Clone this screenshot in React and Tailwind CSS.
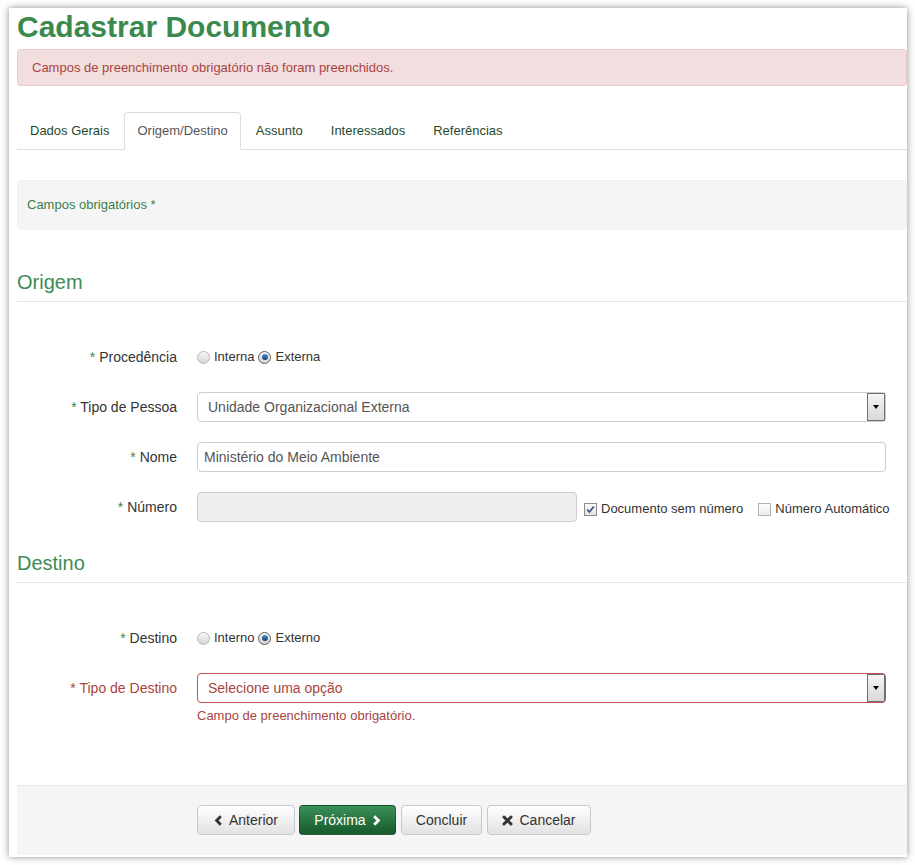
import React from "react";

function Radio({ checked }) {
  if (checked) {
    return (
      <span className="inline-flex h-[13px] w-[13px] items-center justify-center rounded-full border border-[#5a5a5a] bg-linear-to-b from-[#f4f4f4] to-[#d4d4d4]">
        <span className="h-[6px] w-[6px] rounded-full bg-linear-to-b from-[#4a93d6] to-[#0d3f73]" />
      </span>
    );
  }
  return (
    <span className="inline-block h-[13px] w-[13px] rounded-full border border-[#b8b8b8] bg-linear-to-b from-[#f7f7f7] to-[#d6d6d6]" />
  );
}

function Checkbox({ checked }) {
  return (
    <span
      className={
        "inline-flex h-[13px] w-[13px] items-center justify-center border " +
        (checked
          ? "border-[#8c8c8c] bg-linear-to-b from-[#fafafa] to-[#e2e2e2]"
          : "border-[#b3b3b3] bg-linear-to-b from-[#fcfcfc] to-[#ececec]")
      }
    >
      {checked && (
        <svg width="9" height="9" viewBox="0 0 9 9">
          <path d="M1.2 4.6 L3.5 7 L7.8 1.4" stroke="#3d4f7c" strokeWidth="1.7" fill="none" />
        </svg>
      )}
    </span>
  );
}

function Label({ children, error }) {
  return (
    <div
      className={
        "w-[160px] shrink-0 text-right text-[14px] " +
        (error ? "text-[#a94442]" : "text-[#333]")
      }
    >
      <span className={error ? "text-[#a94442]" : "text-[#3c8a52]"}>*</span> {children}
    </div>
  );
}

function Select({ value, error }) {
  return (
    <div
      className={
        "flex h-[30px] w-[689px] items-stretch rounded-[4px] border bg-white " +
        (error ? "border-[#c0504d] text-[#a94442]" : "border-[#cccccc] text-[#555]")
      }
    >
      <div className="flex flex-1 items-center pl-[10px] text-[14px]">{value}</div>
      <div className="flex w-[18px] items-center justify-center border border-[#6f6f6f] bg-linear-to-b from-[#f5f5f5] to-[#d8d8d8]">
        <span className="h-0 w-0 border-x-[3.5px] border-t-[4px] border-x-transparent border-t-black" />
      </div>
    </div>
  );
}

function Btn({ children, w, primary, className = "" }) {
  return (
    <button
      className={
        "flex h-[30px] items-center justify-center gap-[6px] rounded-[4px] border text-[14px] " +
        w +
        " " +
        (primary
          ? "border-dotted border-[#0e3a1d] bg-linear-to-b from-[#3b9058] to-[#175a2d] text-white"
          : "border-[#c8c8c8] bg-linear-to-b from-white to-[#e2e2e2] text-[#333]") +
        " " +
        className
      }
    >
      {children}
    </button>
  );
}

export default function App() {
  return (
    <div className="min-h-screen bg-white pl-[9px] pt-[8px] font-['Liberation_Sans',Arial,sans-serif]">
      <div className="flex h-[849px] w-[898px] flex-col bg-white pb-[2px] pl-[8px] shadow-[0_0_7px_rgba(0,0,0,0.45)]">
        <h1 className="h-[41px] pt-[1px] text-[30px] font-bold leading-[36px] text-[#3a8a4e]">
          Cadastrar Documento
        </h1>

        <div className="flex h-[37px] items-center rounded-[3px] border border-[#ebccd1] bg-[#f2dede] pl-[14px] text-[13px] text-[#a94442]">
          Campos de preenchimento obrigatório não foram preenchidos.
        </div>

        <div className="mt-[26px] flex h-[38px] items-end border-b border-[#dddddd] text-[13px]">
          <div className="-mb-px mr-[2px] h-[38px] px-[13px] leading-[38px] text-[#1f4a2d]">Dados Gerais</div>
          <div className="-mb-px mr-[2px] h-[38px] rounded-t-[4px] border border-[#dddddd] border-b-white bg-white px-[12px] leading-[36px] text-[#555]">
            Origem/Destino
          </div>
          <div className="-mb-px mr-[2px] h-[38px] px-[13px] leading-[38px] text-[#1f4a2d]">Assunto</div>
          <div className="-mb-px mr-[2px] h-[38px] px-[13px] leading-[38px] text-[#1f4a2d]">Interessados</div>
          <div className="-mb-px mr-[2px] h-[38px] px-[13px] leading-[38px] text-[#1f4a2d]">Referências</div>
        </div>

        <div className="mt-[30px] flex h-[50px] items-center rounded-[4px] border border-[#f0f0f0] bg-[#f5f5f5] pl-[9px] text-[13px] text-[#3a7f4c]">
          Campos obrigatórios *
        </div>

        <div className="mt-[41px] border-b border-[#e5e5e5] pb-[8px] text-[20px] leading-[22px] text-[#3d8b55]">
          Origem
        </div>

        <div className="mt-[40px] flex h-[30px] items-center">
          <Label>Procedência</Label>
          <div className="ml-[20px] flex items-center text-[13px] text-[#333]">
            <Radio />
            <span className="ml-[4px] mr-[4px]">Interna</span>
            <Radio checked />
            <span className="ml-[4px]">Externa</span>
          </div>
        </div>

        <div className="mt-[20px] flex h-[30px] items-center">
          <Label>Tipo de Pessoa</Label>
          <div className="ml-[20px]">
            <Select value="Unidade Organizacional Externa" />
          </div>
        </div>

        <div className="mt-[20px] flex h-[30px] items-center">
          <Label>Nome</Label>
          <div className="ml-[20px] flex h-[30px] w-[689px] items-center rounded-[4px] border border-[#cccccc] bg-white pl-[6px] text-[14px] text-[#555]">
            Ministério do Meio Ambiente
          </div>
        </div>

        <div className="mt-[20px] flex h-[30px] items-center">
          <Label>Número</Label>
          <div className="ml-[20px] flex items-center">
            <div className="h-[30px] w-[380px] rounded-[4px] border border-[#cccccc] bg-[#eeeeee]" />
            <div className="ml-[7px] mt-[4px] flex items-center text-[13px] text-[#333]">
              <Checkbox checked />
              <span className="ml-[4px]">Documento sem número</span>
              <span className="ml-[15px]" />
              <Checkbox />
              <span className="ml-[4px]">Número Automático</span>
            </div>
          </div>
        </div>

        <div className="mt-[30px] border-b border-[#e5e5e5] pb-[8px] text-[20px] leading-[22px] text-[#3d8b55]">
          Destino
        </div>

        <div className="mt-[40px] flex h-[30px] items-center">
          <Label>Destino</Label>
          <div className="ml-[20px] flex items-center text-[13px] text-[#333]">
            <Radio />
            <span className="ml-[4px] mr-[4px]">Interno</span>
            <Radio checked />
            <span className="ml-[4px]">Externo</span>
          </div>
        </div>

        <div className="mt-[20px] flex h-[30px] items-center">
          <Label error>Tipo de Destino</Label>
          <div className="ml-[20px]">
            <Select value="Selecione uma opção" error />
          </div>
        </div>
        <div className="ml-[180px] mt-[5px] text-[13px] leading-[16px] text-[#a94442]">
          Campo de preenchimento obrigatório.
        </div>

        <div className="mt-auto flex h-[70px] border-t border-[#e5e5e5] bg-[#f5f5f5] pl-[180px] pt-[19px]">
          <Btn w="w-[98px]">
            <svg width="9" height="11" viewBox="0 0 9 11">
              <path d="M6.8 1.2 L2.6 5.5 L6.8 9.8" stroke="currentColor" strokeWidth="2.8" fill="none" />
            </svg>
            Anterior
          </Btn>
          <Btn w="w-[97px]" primary className="ml-[4px]">
            Próxima
            <svg width="9" height="11" viewBox="0 0 9 11">
              <path d="M2.2 1.2 L6.4 5.5 L2.2 9.8" stroke="currentColor" strokeWidth="2.8" fill="none" />
            </svg>
          </Btn>
          <Btn w="w-[81px]" className="ml-[5px]">
            Concluir
          </Btn>
          <Btn w="w-[104px]" className="ml-[5px]">
            <svg width="11" height="11" viewBox="0 0 11 11">
              <path d="M2 2 L9 9 M9 2 L2 9" stroke="currentColor" strokeWidth="3" strokeLinecap="round" />
            </svg>
            Cancelar
          </Btn>
        </div>
      </div>
    </div>
  );
}
